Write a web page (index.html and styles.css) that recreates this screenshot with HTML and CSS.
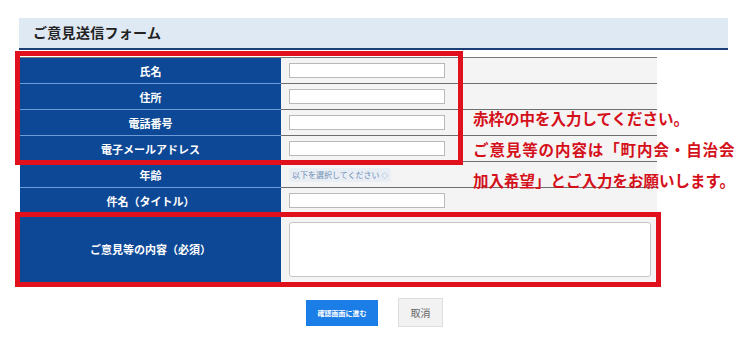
FILE: index.html
```html
<!DOCTYPE html>
<html lang="ja">
<head>
<meta charset="utf-8">
<title>ご意見送信フォーム</title>
<link rel="stylesheet" href="styles.css">
</head>
<body>
<div class="page">
  <h1 class="title">ご意見送信フォーム</h1>
  <div class="form-table">
    <div class="label">氏名</div><div class="field"><span class="input"></span></div>
    <div class="label">住所</div><div class="field"><span class="input"></span></div>
    <div class="label">電話番号</div><div class="field"><span class="input"></span></div>
    <div class="label">電子メールアドレス</div><div class="field"><span class="input"></span></div>
    <div class="label">年齢</div><div class="field"><span class="select">以下を選択してください <span class="sel-icon">◇</span></span></div>
    <div class="label">件名（タイトル）</div><div class="field"><span class="input"></span></div>
    <div class="label tall">ご意見等の内容（必須）</div><div class="field tall"><span class="textarea"></span></div>
  </div>
  <div class="buttons">
    <span class="btn-primary">確認画面に進む</span>
    <span class="btn-cancel">取消</span>
  </div>
  <div class="red-box box-1"></div>
  <div class="red-box box-2"></div>
  <div class="note"><span class="note-line">赤枠の中を入力してください。</span><span class="note-line wide">ご意見等の内容は「町内会・自治会</span><span class="note-line">加入希望」とご入力をお願いします。</span></div>
</div>
</body>
</html>
```
FILE: styles.css
```css
* { box-sizing: border-box; }
html, body { margin: 0; padding: 0; background: #fff; }
body { font-family: "Noto Sans CJK JP", "Noto Sans", sans-serif; }
.page { position: relative; width: 750px; height: 342px; padding-top: 18px; overflow: hidden; }
.title {
  margin: 0 0 0 19px; width: 709px; height: 32px;
  background: #dfe9f4; border-bottom: 2px solid #1d3f78;
  font-size: 14px; font-weight: 700; color: #222;
  padding-left: 14px; line-height: 29px; letter-spacing: 0.3px;
}
.form-table {
  margin: 7px 0 0 20px; width: 637px;
  display: grid; grid-template-columns: 261px 376px;
  border-top: 1px solid #777; border-right: 1px solid #888;
}
.label {
  height: 26px; background: #0d4896; color: #fff;
  font-size: 11px; font-weight: 700;
  display: flex; align-items: center; justify-content: center;
  border-bottom: 1px solid #6d9bd8;
}
.field {
  height: 26px; background: #f4f4f4;
  border-bottom: 1px solid #6f6f6f;
  display: flex; align-items: center; padding-left: 8px;
}
.label.tall, .field.tall { height: 70px; border-bottom: none; }
.input { display: block; width: 156px; height: 15px; background: #fff; border: 1px solid #b9b9b9; }
.select {
  font-size: 8px; color: #6e8db4; background: #e9eef5;
  padding: 1px 3px; border-radius: 2px; line-height: 12px;
}
.sel-icon { font-size: 7px; }
.textarea { display: block; width: 362px; height: 55px; background: #fff; border: 1px solid #c4c4c4; border-radius: 3px; }
.buttons { display: flex; align-items: center; gap: 20px; margin: 14px 0 0 306px; }
.btn-primary {
  width: 72px; height: 26px; background: #1b7de6; color: #fff;
  font-size: 7px; font-weight: 700;
  display: flex; align-items: center; justify-content: center;
}
.btn-cancel {
  width: 45px; height: 29px; background: #f2f2f2; border: 1px solid #ddd;
  color: #666; font-size: 10px;
  display: flex; align-items: center; justify-content: center;
}
.red-box { position: absolute; border: 5px solid #e0101c; }
.box-1 { left: 15px; top: 51px; width: 448px; height: 114px; }
.box-2 { left: 15px; top: 212px; width: 646px; height: 75px; }
.note {
  position: absolute; left: 473px; top: 103px;
  display: flex; flex-direction: column;
  color: #d4101b; font-size: 15.5px; font-weight: 700; line-height: 31px;
  white-space: nowrap;
}
.note-line.wide { letter-spacing: 0.9px; }
```
